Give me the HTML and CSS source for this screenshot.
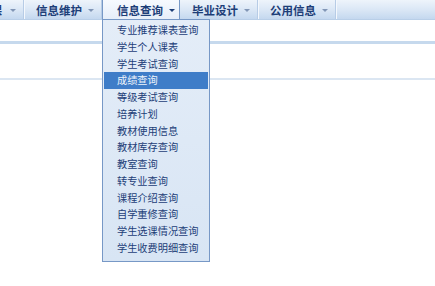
FILE: index.html
```html
<!DOCTYPE html>
<html lang="zh-CN">
<head>
    <meta charset="UTF-8">
    <title>信息查询</title>
    <link rel="stylesheet" href="styles.css">
</head>
<body>
    <div class="menubar">
        <div class="menu-item first">网上选课<span class="arrow"></span></div>
        <div class="menu-item">信息维护<span class="arrow"></span></div>
        <div class="menu-item active">信息查询<span class="arrow"></span>
            <ul class="dropdown">
                <li>专业推荐课表查询</li>
                <li>学生个人课表</li>
                <li>学生考试查询</li>
                <li class="current">成绩查询</li>
                <li>等级考试查询</li>
                <li>培养计划</li>
                <li>教材使用信息</li>
                <li>教材库存查询</li>
                <li>教室查询</li>
                <li>转专业查询</li>
                <li>课程介绍查询</li>
                <li>自学重修查询</li>
                <li>学生选课情况查询</li>
                <li>学生收费明细查询</li>
            </ul>
        </div>
        <div class="menu-item">毕业设计<span class="arrow"></span></div>
        <div class="menu-item">公用信息<span class="arrow"></span></div>
    </div>

    <div class="content">
        <div class="row top"></div>
        <div class="row band"></div>
        <div class="row middle"></div>
        <div class="row band light"></div>
    </div>
</body>
</html>
```

FILE: styles.css
```css
:root {
    --text: #1d3e78;
    --border: #7798c6;
}

html {
    overflow: hidden;
}

body {
    margin: 0;
    min-height: 286px;
    background: #fff;
    font-family: "Noto Sans CJK SC", "Liberation Sans", sans-serif;
    font-size: 12px;
}

.menubar {
    position: relative;
    z-index: 5;
    display: flex;
    height: 19px;
    margin-left: -54px;
    background: linear-gradient(#eef4fb, #d9e6f5 55%, #c4d8ef);
    border-bottom: 1px solid #b9cfe8;
}

.menu-item {
    position: relative;
    display: flex;
    align-items: center;
    flex: none;
    width: 65px;
    padding-left: 12px;
    font-size: 11.5px;
    font-weight: bold;
    color: var(--text);
    border-right: 1px solid #b7cce6;
    box-shadow: 1px 0 0 #f4f8fd;
    white-space: nowrap;
}

.menu-item.first {
    width: 67px;
    padding-left: 10px;
}

.menu-item.first .arrow {
    margin-left: 8px;
}

.arrow {
    display: inline-block;
    margin-left: 6px;
    margin-top: 1px;
    border-left: 3px solid transparent;
    border-right: 3px solid transparent;
    border-top: 3px solid #8196b6;
}

.menu-item.active {
    width: 62px;
    padding-left: 14px;
    background: linear-gradient(#f7faff, #e6eef9);
    border-left: 1px solid var(--border);
    border-right: 1px solid var(--border);
    box-shadow: none;
}

.menu-item.active .arrow {
    border-top-color: var(--text);
}

.dropdown {
    position: absolute;
    top: 19px;
    left: -1px;
    z-index: 2;
    width: 104px;
    margin: 0;
    padding: 2px 1px 4px;
    list-style: none;
    background: linear-gradient(#e4edf8, #d8e5f4);
    border: 1px solid var(--border);
    font-size: 10.2px;
    font-weight: normal;
}

.dropdown li {
    height: 16.77px;
    line-height: 16.77px;
    padding-left: 13px;
    color: var(--text);
}

.dropdown li.current {
    background: #3f7dc8;
    color: #eef4fb;
}

.content .row {
    height: 21px;
}

.content .band {
    height: 3px;
    background: #c6d9ed;
}

.content .middle {
    height: 34px;
}

.content .band.light {
    height: 2px;
    background: #dbe6f2;
}
```
